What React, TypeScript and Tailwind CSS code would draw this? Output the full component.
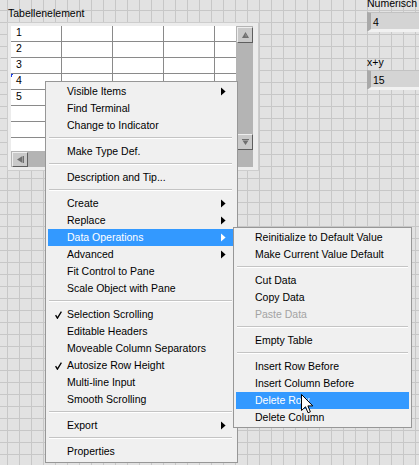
import React from "react";

const F = "font-['Liberation_Sans',Arial,sans-serif]";

type It = { t: string; sub?: boolean; check?: boolean; hl?: boolean; dis?: boolean } | "sep";

const mainItems: It[] = [
  { t: "Visible Items", sub: true },
  { t: "Find Terminal" },
  { t: "Change to Indicator" },
  "sep",
  { t: "Make Type Def." },
  "sep",
  { t: "Description and Tip..." },
  "sep",
  { t: "Create", sub: true },
  { t: "Replace", sub: true },
  { t: "Data Operations", sub: true, hl: true },
  { t: "Advanced", sub: true },
  { t: "Fit Control to Pane" },
  { t: "Scale Object with Pane" },
  "sep",
  { t: "Selection Scrolling", check: true },
  { t: "Editable Headers" },
  { t: "Moveable Column Separators" },
  { t: "Autosize Row Height", check: true },
  { t: "Multi-line Input" },
  { t: "Smooth Scrolling" },
  "sep",
  { t: "Export", sub: true },
  "sep",
  { t: "Properties" },
];

const subItems: It[] = [
  { t: "Reinitialize to Default Value" },
  { t: "Make Current Value Default" },
  "sep",
  { t: "Cut Data" },
  { t: "Copy Data" },
  { t: "Paste Data", dis: true },
  "sep",
  { t: "Empty Table" },
  "sep",
  { t: "Insert Row Before" },
  { t: "Insert Column Before" },
  { t: "Delete Row", hl: true },
  { t: "Delete Column" },
];

function MenuRows({ items }: { items: It[] }) {
  return (
    <>
      {items.map((it, i) =>
        it === "sep" ? (
          <div key={i} className="h-[9px] pt-[3px] px-px">
            <div className="h-px bg-[#c4c4c4]" />
            <div className="h-px bg-white" />
          </div>
        ) : (
          <div
            key={i}
            className={`relative h-[17px] leading-[17px] pl-[19px] whitespace-nowrap ${
              it.hl ? "bg-[#3399ff] text-white" : it.dis ? "text-[#a3a3a3]" : "text-black"
            }`}
          >
            {it.check && (
              <svg className="absolute left-[7px] top-[5px]" width="7" height="8" viewBox="0 0 7 8">
                <path d="M0.6 4.2 L2.4 7.2 L6.4 0.6" fill="none" stroke="#000" strokeWidth="1.3" />
              </svg>
            )}
            {it.t}
            {it.sub && (
              <svg className="absolute right-[7px] top-[4px]" width="5" height="9" viewBox="0 0 5 9">
                <path d="M0 0.5 L4.6 4.5 L0 8.5 Z" fill={it.hl ? "#fff" : "#000"} />
              </svg>
            )}
          </div>
        )
      )}
    </>
  );
}

function ScrollBtn({ dir }: { dir: "up" | "down" | "left" }) {
  return (
    <div
      className={`${dir === "left" ? "h-[15px]" : "h-[16px]"} w-[16px] bg-[#c9c9c9] border border-[#eeeeee] border-r-[#5e5e5e] border-b-[#5e5e5e] flex items-center justify-center`}
    >
      {dir === "up" && (
        <svg width="7" height="6" viewBox="0 0 7 6">
          <path d="M3.5 0 L7 6 L0 6 Z" fill="#6f6f6f" />
          <path d="M3.5 1.5 L5 4.5 L3.5 4.5 Z" fill="#9a9a9a" />
        </svg>
      )}
      {dir === "down" && (
        <svg width="7" height="6" viewBox="0 0 7 6">
          <rect x="0" y="0" width="7" height="1" fill="#6f6f6f" />
          <path d="M0.5 1.5 L6.5 1.5 L3.5 6 Z" fill="#6f6f6f" />
        </svg>
      )}
      {dir === "left" && (
        <svg width="7" height="7" viewBox="0 0 7 7">
          <path d="M0 3.5 L5.5 0 L5.5 7 Z" fill="#6f6f6f" />
          <rect x="6" y="0" width="1" height="7" fill="#6f6f6f" />
        </svg>
      )}
    </div>
  );
}

function TableControl() {
  const rows = ["1", "2", "3", "4", "5", "", "", ""];
  return (
    <div className="absolute left-[7px] top-[22px] w-[252px] h-[149px] bg-[#ececec] border border-[#cdcdcd] pl-[3px] pt-[3px]">
      <div className="flex">
        <div className="flex flex-col">
          <div className="relative w-[225px] h-[125px] bg-white overflow-hidden">
            {rows.map((r, i) => (
              <div key={i} className="flex h-[16px] border-b border-[#8a8a8a]">
                {[0, 1, 2, 3].map((c) => (
                  <div
                    key={c}
                    className="w-[51px] h-[15px] shrink-0 border-r border-[#8a8a8a] pl-[5px] leading-[13px] text-black"
                  >
                    {c === 0 ? r : ""}
                  </div>
                ))}
                <div className="flex-1" />
              </div>
            ))}
            <div className="absolute left-0 top-[48px] w-[2px] h-[3px] border-l border-t border-[#1a3ee8]" />
          </div>
          <div className="w-[225px] h-[16px] bg-[#b4b4b4] pl-px pt-px">
            <ScrollBtn dir="left" />
          </div>
        </div>
        <div className="w-[17px] h-[141px] bg-[#b4b4b4] flex flex-col pl-px pt-px">
          <ScrollBtn dir="up" />
          <div className="h-[91px] shrink-0" />
          <ScrollBtn dir="down" />
        </div>
      </div>
    </div>
  );
}

function NumBox({ top, value }: { top: string; value: string }) {
  return (
    <div
      className={`absolute left-[367px] ${top} w-[60px] h-[20px] bg-[#d4d4d4] border-l-[4px] border-l-[#a9a9a9] border-t border-t-[#c2c2c2] border-b-[3px] border-b-[#f1f1f1] pl-[2px] leading-[18px] text-black`}
    >
      {value}
    </div>
  );
}

export default function App() {
  return (
    <div
      className={`relative w-[419px] h-[465px] overflow-hidden bg-[#e2e2e2] bg-[linear-gradient(to_right,#c7c7c7_1px,transparent_1px),linear-gradient(to_bottom,#c7c7c7_1px,transparent_1px)] [background-size:12px_12px] [background-position:7px_10px] text-[10.5px] ${F}`}
    >
      <div className="absolute left-[8px] top-[7px] leading-[13px] text-black whitespace-nowrap">Tabellenelement</div>
      <TableControl />

      <div className="absolute left-[367px] top-[-4px] leading-[15px] text-black whitespace-nowrap">Numerisch</div>
      <NumBox top="top-[12px]" value="4" />
      <div className="absolute left-[367px] top-[55px] leading-[15px] text-black whitespace-nowrap">x+y</div>
      <NumBox top="top-[70px]" value="15" />

      <div className="absolute left-[45px] top-[81px] w-[193px] bg-[#f0f0f0] border border-[#979797] pt-px pb-[2px] pl-[2px] pr-[4px]">
        <MenuRows items={mainItems} />
      </div>

      <div className="absolute left-[233px] top-[227px] w-[179px] bg-[#f0f0f0] border border-[#979797] pt-px pb-px pl-[2px] pr-[2px]">
        <MenuRows items={subItems} />
      </div>

      <svg className="absolute left-[301px] top-[394px]" width="13" height="20" viewBox="0 0 13 20">
        <path
          d="M0.5 0.5 V16.5 L4.5 12.8 L7 18.8 L9.4 17.8 L6.9 11.9 H11.8 Z"
          fill="#fff"
          stroke="#000"
          strokeWidth="1"
          strokeLinejoin="miter"
        />
      </svg>
    </div>
  );
}
